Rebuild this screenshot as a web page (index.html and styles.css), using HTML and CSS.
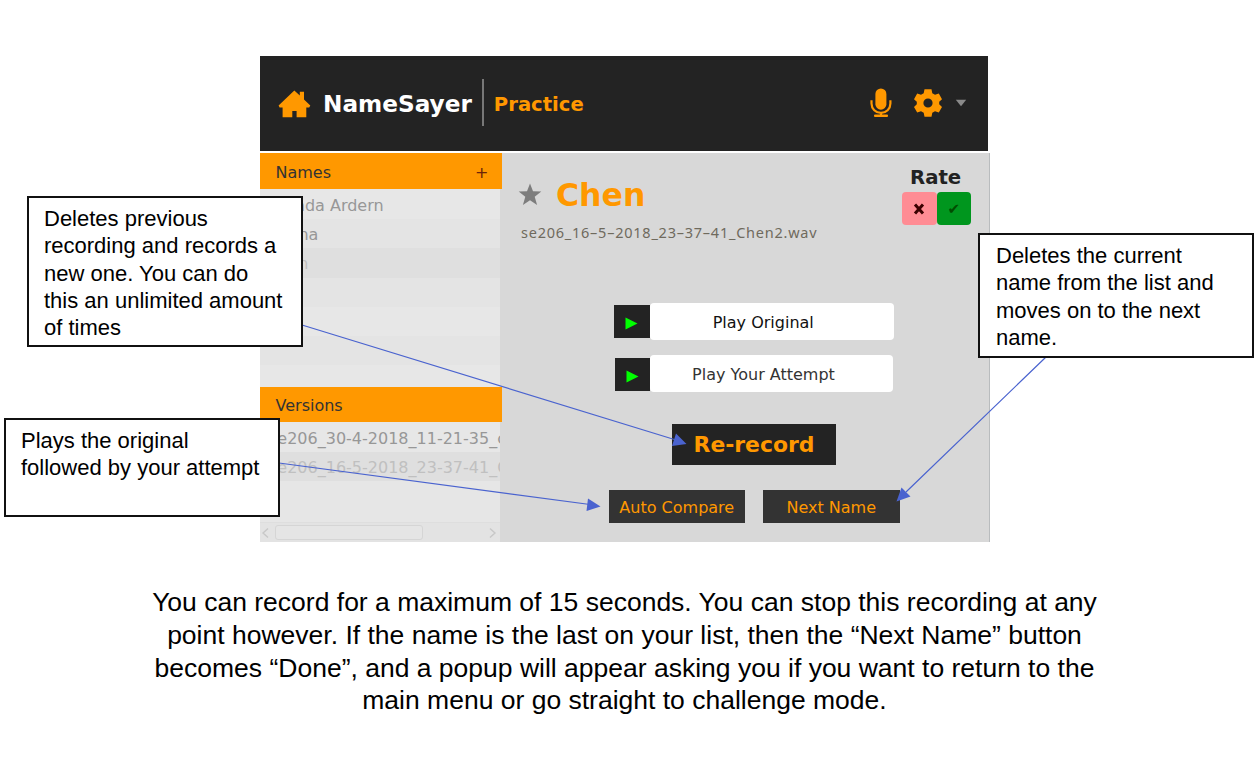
FILE: index.html
```html
<!DOCTYPE html>
<html lang="en">
<head>
<meta charset="utf-8">
<title>NameSayer – Practice</title>
<link rel="stylesheet" href="styles.css">
</head>
<body>
<main class="page">
  <section class="app">
    <header class="topbar">
      <svg class="home" width="33" height="28" viewBox="0 0 33 28"><path d="M16.3 0.5 L21.8 5.6 V1.8 H26 V9.6 L32.3 15.6 L31.2 17.6 H28.3 V27.3 H18.6 V21 H14.3 V27.3 H4.6 V17.6 H1.6 L0.6 15.6 Z"/></svg>
      <span class="brand">NameSayer</span>
      <span class="rule"></span>
      <span class="screen">Practice</span>
      <span class="tools">
        <svg class="mic" width="22" height="30" viewBox="0 0 22 30"><rect x="5.4" y="0.5" width="11" height="21.2" rx="5.5"/><path class="stroke" d="M1.5 12.3V15.5A9.4 9.4 0 0 0 20.4 15.5V12.3M11 25V28"/><rect x="4" y="26.6" width="14" height="2.3" rx="1"/></svg>
        <svg class="gear" width="28" height="28" viewBox="0 0 28 28"><path fill-rule="evenodd" d="M10.5 0.3H17.5L18.3 4.2L21 5.8L24.8 4.5L28 10.2L25.2 12.8V15.3L28 17.9L24.8 23.5L21 22.3L18.3 23.8L17.5 27.7H10.5L9.7 23.8L7 22.3L3.2 23.5L0 17.9L2.8 15.3V12.8L0 10.2L3.2 4.5L7 5.8L9.7 4.2ZM14 9.4A4.6 4.6 0 1 0 14 18.6A4.6 4.6 0 1 0 14 9.4Z"/></svg>
        <svg class="caret" width="12" height="8" viewBox="0 0 12 8"><path d="M0.8 0.8H11.2L6 7.2Z"/></svg>
      </span>
    </header>
    <div class="body">
      <aside class="sidebar">
        <div class="heading"><span>Names</span><span class="plus">+</span></div>
        <div class="list names">
          <div class="row">Jacinda Ardern</div>
          <div class="row alt name-two">Joanna</div>
          <div class="row selected name-three">Chen</div>
          <div class="row alt"></div>
          <div class="row"></div>
          <div class="row alt"></div>
          <div class="row"></div>
        </div>
        <div class="heading versions-heading"><span>Versions</span></div>
        <div class="list versions">
          <div class="row">se206_30-4-2018_11-21-35_c</div>
          <div class="row selected">se206_16-5-2018_23-37-41_C</div>
          <div class="spacer"></div>
          <div class="scrollbar">
            <svg width="7" height="12" viewBox="0 0 7 12"><path d="M6 1.5L1 6L6 10.5"/></svg>
            <span class="thumb"></span>
            <svg width="7" height="12" viewBox="0 0 7 12"><path d="M1 1.5L6 6L1 10.5"/></svg>
          </div>
        </div>
      </aside>
      <section class="practice">
        <div class="top">
          <div class="current">
            <div class="title">
              <svg width="24" height="23" viewBox="0 0 24 23"><path d="M12 0.5L15 8.3L23.3 8.6L16.7 13.7L19.1 21.9L12 17.2L4.9 21.9L7.3 13.7L0.7 8.6L9 8.3Z"/></svg>
              <span class="name">Chen</span>
            </div>
            <div class="file">se206_16–5–2018_23–37–41_Chen2.wav</div>
          </div>
          <div class="rate">
            <span class="label">Rate</span>
            <div class="votes"><span class="bad"><svg width="12" height="12" viewBox="0 0 12 12"><path d="M2 1.5L10 10.5M10 1.5L2 10.5"/></svg></span><span class="good">✔</span></div>
          </div>
        </div>
        <div class="play original"><span class="icon"><svg width="13" height="13" viewBox="0 0 13 13"><path d="M0.5 0.5L12.5 6.5L0.5 12.5Z"/></svg></span><span class="field">Play Original</span></div>
        <div class="play attempt"><span class="icon"><svg width="13" height="13" viewBox="0 0 13 13"><path d="M0.5 0.5L12.5 6.5L0.5 12.5Z"/></svg></span><span class="field">Play Your Attempt</span></div>
        <div class="record">Re-record</div>
        <div class="actions"><span class="button">Auto Compare</span><span class="button">Next Name</span></div>
      </section>
    </div>
  </section>

  <p class="caption">You can record for a maximum of 15 seconds. You can stop this recording at any<br>point however. If the name is the last on your list, then the “Next Name” button<br>becomes “Done”, and a popup will appear asking you if you want to return to the<br>main menu or go straight to challenge mode.</p>

  <svg class="connectors" width="1258" height="776" viewBox="0 0 1258 776">
    <path class="line" d="M302 325L676 440M279 463L590 504.500M1046 357L906 492"/>
    <path class="head" d="M686.500 444L676 433.500L672 446ZM600.500 506.500L588 498.500L586.500 511ZM896.500 501.500L901.500 487.500L910.500 496.500Z"/>
  </svg>

  <div class="callout delete-recording">Deletes previous<br>recording and records a<br>new one. You can do<br>this an unlimited amount<br>of times</div>
  <div class="callout plays">Plays the original<br>followed by your attempt</div>
  <div class="callout delete-name">Deletes the current<br>name from the list and<br>moves on to the next<br>name.</div>
</main>
</body>
</html>
```
FILE: styles.css
```css
* { box-sizing: border-box; }
body { margin: 0; background: #fff; }
svg { display: block; flex: none; }

.page {
  position: relative;
  width: 1258px;
  height: 776px;
  padding-top: 56px;
  overflow: hidden;
  font-family: "DejaVu Sans", sans-serif;
}

.app { width: 730px; height: 486px; margin-left: 260px; }

.topbar {
  display: flex;
  align-items: center;
  width: 728px;
  height: 95px;
  padding-left: 17.500px;
  background: #232323;
  color: #ff9800;
  font-weight: bold;
}
.home, .mic, .gear { fill: #ff9800; }
.brand { margin-left: 12.500px; color: #fff; font-size: 23.200px; }
.rule { width: 2px; height: 47px; margin: -3px 0 0 10px; background: #777; }
.screen { margin-left: 10px; padding-top: 1px; font-size: 19.600px; }
.tools { display: flex; align-items: center; margin-left: auto; padding: 0 21.500px 2px 0; }
.mic .stroke { fill: none; stroke: #ff9800; stroke-width: 2.200; }
.gear { margin-left: 22px; }
.caret { margin-left: 13px; fill: #8a8a8a; }

.body {
  display: flex;
  height: 389px;
  margin-top: 2px;
  background: #d8d8d8;
  border-right: 1px solid #b9bcbe;
}

.sidebar { display: flex; flex-direction: column; width: 241.500px; flex: none; font-size: 16px; }
.heading {
  display: flex;
  align-items: center;
  justify-content: space-between;
  height: 36px;
  padding: 2px 13px 0 15.500px;
  background: #ff9800;
  color: #333;
}
.plus { color: #6b2409; }
.list { display: flex; flex-direction: column; width: 239.500px; overflow: hidden; }
.names { height: 198px; padding-top: 1px; background: #e7e7e7; }
.row {
  height: 29.200px;
  padding-left: 9px;
  flex: none;
  line-height: 31px;
  white-space: nowrap;
  overflow: hidden;
  background: #e7e7e7;
  color: #979797;
}
.names .row { padding-left: 7px; }
.names .name-two { padding-left: 4px; }
.names .name-three { padding-left: 7px; }
.row.alt { background: #e4e4e4; }
.row.selected { background: #dfdfdf; color: #c0c0c0; }
.versions-heading { height: 35px; }
.versions { height: 120px; padding-top: 1px; background: #e7e7e7; }
.spacer { flex: 1; background: #e6e6e6; }
.scrollbar {
  display: flex;
  align-items: center;
  height: 20px;
  padding: 0 4px 0 2px;
  border-top: 1px solid #dedede;
  background: #e3e3e3;
}
.scrollbar path { fill: none; stroke: #c8c8c8; stroke-width: 1.500; }
.thumb {
  width: 148px;
  height: 15px;
  margin: 0 auto 0 6px;
  border: 1px solid #d5d5d5;
  border-radius: 3px;
  background: #e5e5e5;
}

.practice { flex: 1; margin-left: -0.500px; }
.top { display: flex; justify-content: space-between; height: 150px; padding: 12px 18px 0 17px; }
.title { display: flex; align-items: center; height: 56px; padding-top: 3px; }
.title svg { fill: #7d7d7d; }
.name { margin-left: 14px; color: #ff9800; font-size: 31.500px; font-weight: bold; }
.file {
  padding-left: 3px;
  margin-top: 1px;
  color: #6f6a5d;
  font-family: "Noto Sans", sans-serif;
  font-size: 14.500px;
  letter-spacing: 0.760px;
  line-height: 20px;
  white-space: nowrap;
}
.rate { width: 69px; }
.label { display: block; padding: 1px 0 0 8px; color: #222; font-size: 19.700px; font-weight: bold; line-height: 24px; }
.votes { display: flex; margin-top: 2px; }
.bad, .good { display: flex; align-items: center; justify-content: center; width: 34.500px; height: 33px; border-radius: 4px; }
.bad { background: #ff8c94; }
.bad path { fill: none; stroke: #3b0000; stroke-width: 3; }
.good { background: #00961e; color: #004d00; font-size: 15px; }

.play { display: flex; align-items: center; height: 37px; }
.play .icon { display: flex; align-items: center; justify-content: center; width: 35.500px; height: 33px; background: #232323; }
.play svg { fill: #0f0; margin-top: 4px; }
.field {
  display: flex;
  align-items: center;
  justify-content: center;
  height: 37px;
  padding-top: 1px;
  border-radius: 4px;
  background: #fff;
  font-size: 16px;
}
.original { margin-left: 113px; }
.original .field { width: 244.500px; padding-right: 17px; color: #111; }
.attempt { margin: 15px 0 0 113.500px; }
.attempt .icon { margin-top: 2px; }
.attempt .field { width: 243px; padding-right: 16px; color: #333; }
.record {
  display: flex;
  align-items: center;
  justify-content: center;
  width: 164px;
  height: 41px;
  margin: 32px 0 0 171px;
  background: #232323;
  color: #ff9800;
  font-size: 21.900px;
  font-weight: bold;
}
.actions { display: flex; gap: 18px; margin: 25px 0 0 107.500px; }
.button {
  display: flex;
  align-items: center;
  justify-content: center;
  width: 136.500px;
  height: 33px;
  padding-top: 1px;
  background: #333;
  color: #ff9800;
  font-size: 16px;
}

.caption {
  margin: 44px 0 0 -9px;
  color: #000;
  font-family: "Liberation Sans", sans-serif;
  font-size: 26.500px;
  line-height: 32.800px;
  text-align: center;
  white-space: nowrap;
}

.connectors { position: absolute; left: 0; top: 0; }
.connectors .line { fill: none; stroke: #4a63cf; stroke-width: 1.200; }
.connectors .head { fill: #4a63cf; }

.callout {
  position: absolute;
  border: 2px solid #111;
  background: #fff;
  color: #000;
  font-family: "Liberation Sans", sans-serif;
  font-size: 22px;
  line-height: 27.300px;
  white-space: nowrap;
}
.delete-recording { left: 27px; top: 196px; width: 276px; height: 151px; padding: 7px 0 0 15px; }
.plays { left: 4px; top: 418px; width: 276px; height: 99px; padding: 7px 0 0 15px; }
.delete-name { left: 978px; top: 233px; width: 276px; height: 125px; padding: 7px 0 0 16px; }
```
